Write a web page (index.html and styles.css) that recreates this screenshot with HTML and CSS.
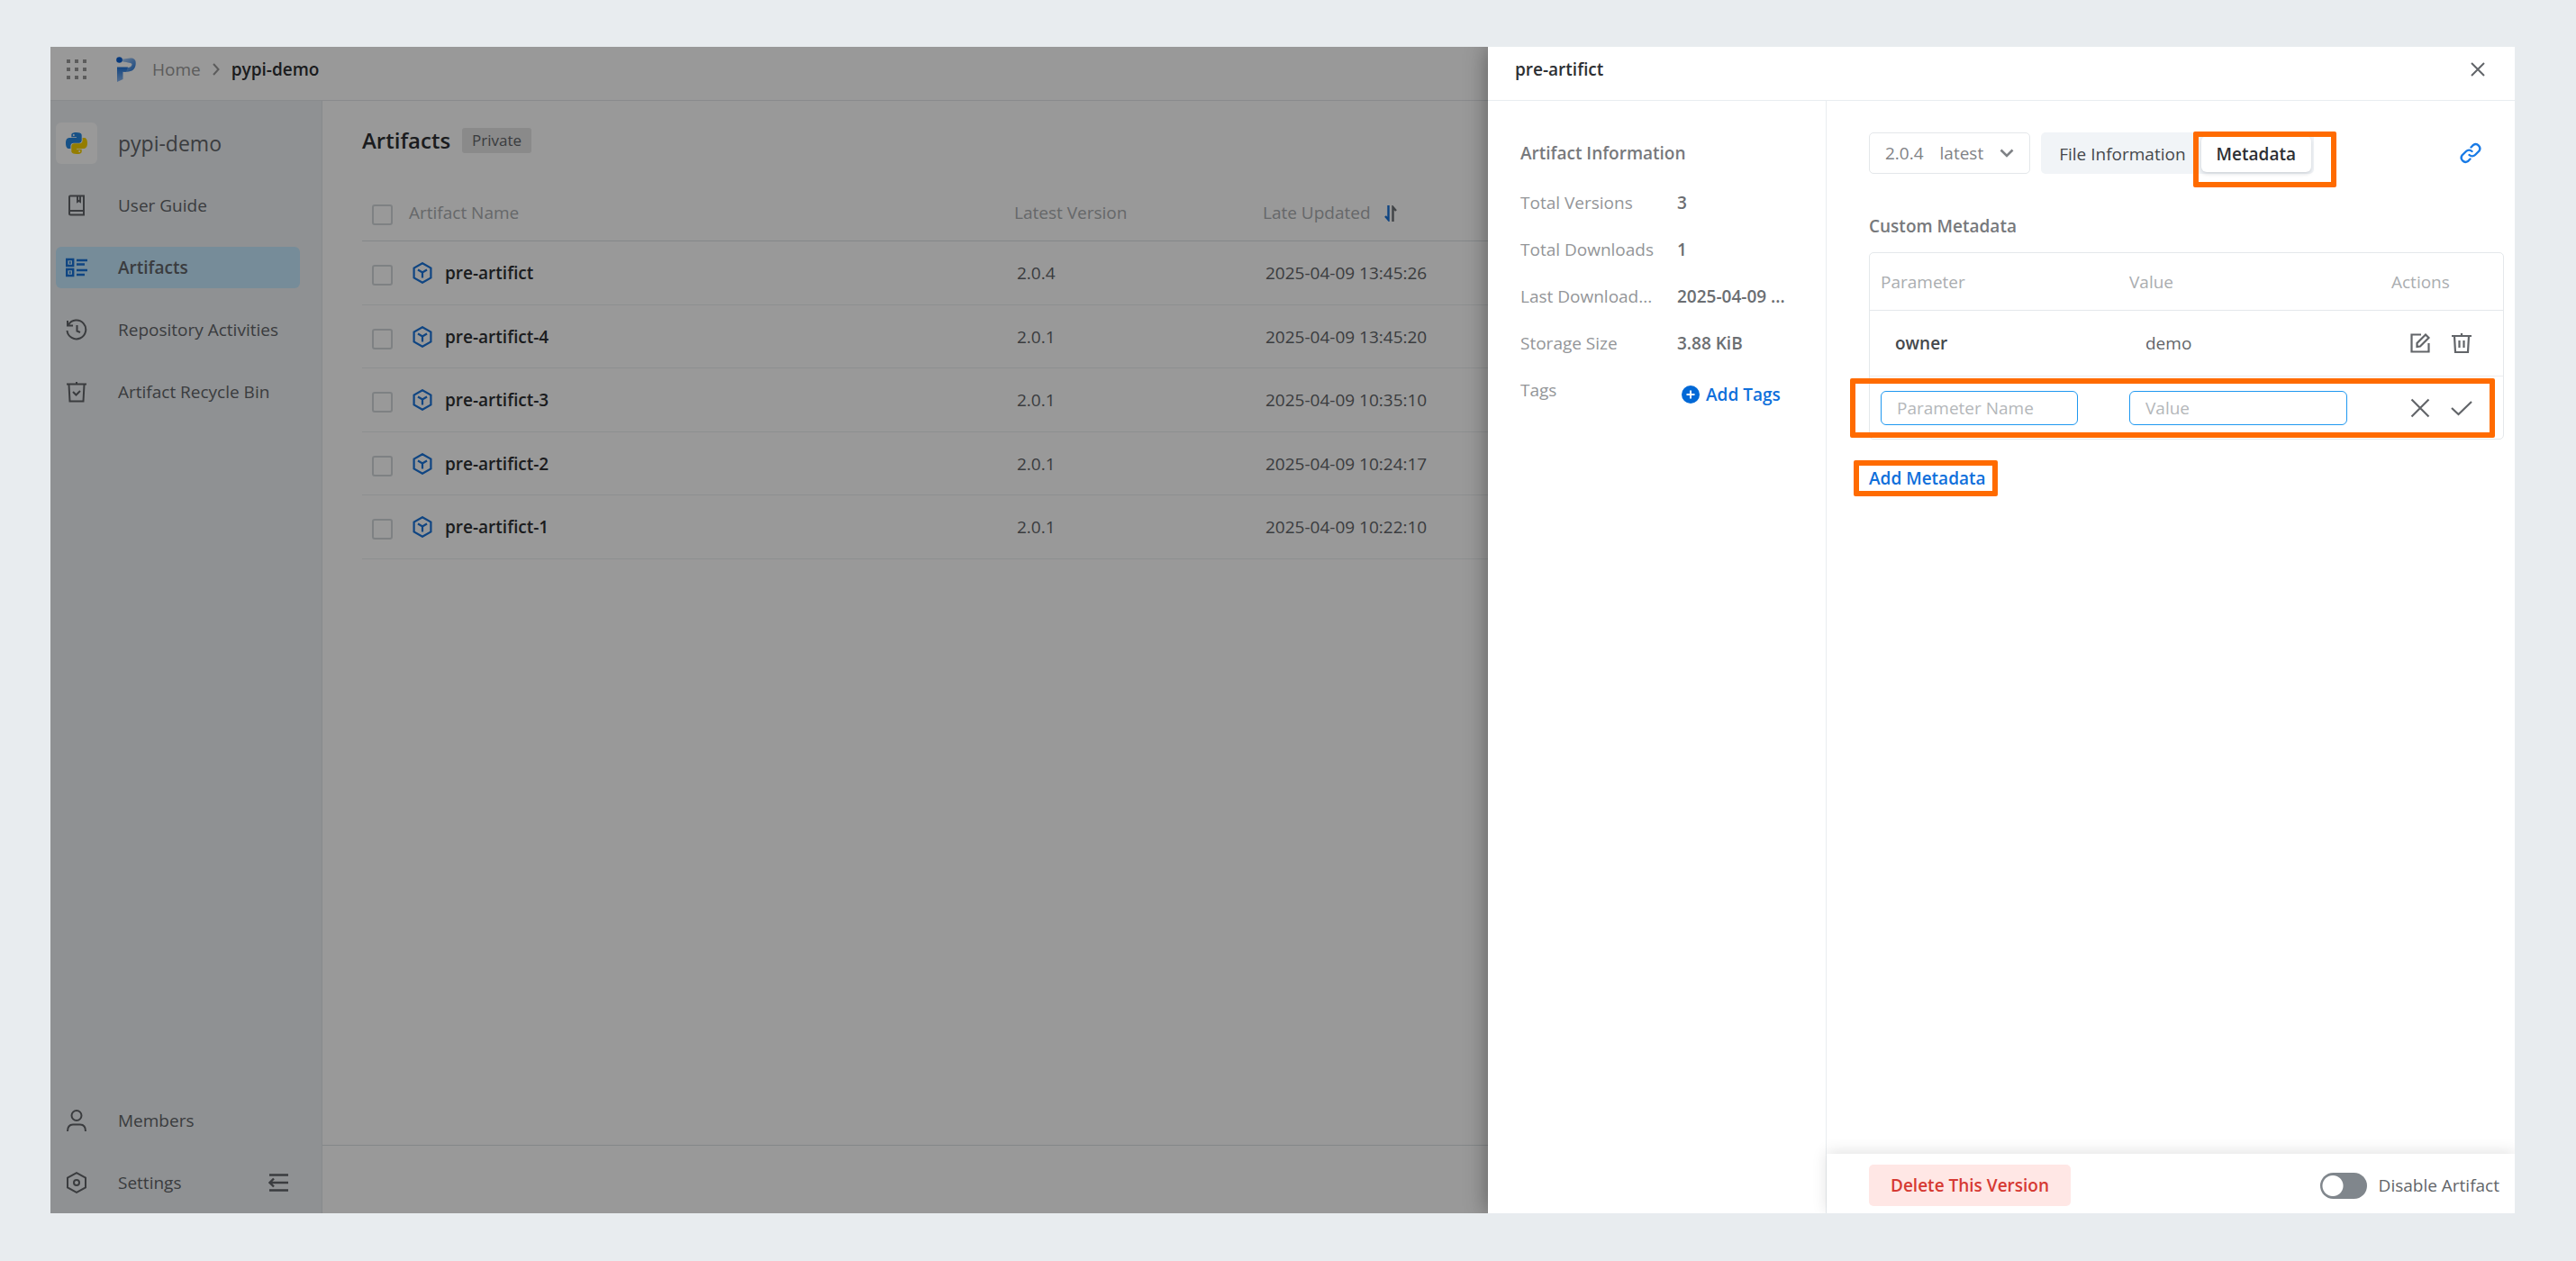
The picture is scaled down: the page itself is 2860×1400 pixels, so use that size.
FILE: index.html
```html
<!DOCTYPE html>
<html lang="en">
<head>
    <title>pypi-demo - Artifacts</title>
    <meta charset="UTF-8">
    <link rel="stylesheet" href="styles.css">
</head>
<body>
    <!-- shared icons -->
    <svg class="sprite" aria-hidden="true">
        <symbol id="icon-cube" viewBox="0 0 24 24">
            <path d="M12 1.200 21.400 6.600v10.800L12 22.800 2.600 17.400V6.600z" fill="none" stroke="currentColor" stroke-width="2.200"/>
            <path d="M7 8.500 12 11.500l5-3M12 11.500V17.500" fill="none" stroke="currentColor" stroke-width="2.200"/>
        </symbol>
        <symbol id="icon-chevron" viewBox="0 0 16 10">
            <path d="M1.500 1.500 8 8l6.500-6.500" fill="none" stroke="currentColor" stroke-width="2.600"/>
        </symbol>
    </svg>

    <div class="window">
        <header class="topbar">
            <button class="icon-btn apps" aria-label="Apps">
                <svg width="22" height="22" viewBox="0 0 22 22" fill="currentColor">
                    <path d="M0 0h4v4H0zM9 0h4v4H9zM18 0h4v4h-4zM0 9h4v4H0zM9 9h4v4H9zM18 9h4v4h-4zM0 18h4v4H0zM9 18h4v4H9zM18 18h4v4h-4z"/>
                </svg>
            </button>
            <svg class="logo" width="24" height="30" viewBox="0 0 24 30">
                <defs>
                    <linearGradient id="lg1" x1="0" y1="0" x2="1" y2="1">
                        <stop offset="0" stop-color="#b9d4f5"/>
                        <stop offset="1" stop-color="#1f73d8"/>
                    </linearGradient>
                    <linearGradient id="lg2" x1="0" y1="0" x2="0" y2="1">
                        <stop offset="0" stop-color="#1f73d8"/>
                        <stop offset="1" stop-color="#8fbaf0"/>
                    </linearGradient>
                </defs>
                <path d="M7 3C10 4.500 15 1.500 19.500 2.800c2.500 1 3.500 3 3.200 6.200-.4 6-4 8.500-9.700 8.700H9V13h5c2.500-.2 4.500-1.500 4.500-3.500C18.500 7.500 15 8 7 6z" fill="url(#lg1)"/>
                <path d="M2 12.500h12l-2 5.200H8.500V26L2 29z" fill="url(#lg2)"/>
                <circle cx="4.500" cy="4.500" r="3.300" fill="#0a5fd0"/>
            </svg>
            <nav class="crumbs">
                <a href="#">Home</a>
                <svg width="8" height="14" viewBox="0 0 8 14"><path d="M1 1l5.500 6L1 13" fill="none" stroke="currentColor" stroke-width="2"/></svg>
                <strong>pypi-demo</strong>
            </nav>
        </header>

        <div class="body">
            <aside class="sidebar">
                <div class="repo">
                    <span class="repo-icon">
                        <svg width="24" height="24" viewBox="0 0 24 24">
                            <path d="M11.900 0C6 0 6.300 2.600 6.300 2.600V5.300h5.700v.8H4S0 5.700 0 12c0 6.200 3.400 6 3.400 6h2v-2.900s-.1-3.400 3.400-3.400h5.700s3.200.1 3.200-3.200V3.200S18.200 0 11.900 0z" fill="#2787e0"/>
                            <circle cx="8.800" cy="2.900" r="1" fill="#fff"/>
                            <path d="M12.100 24c5.900 0 5.600-2.600 5.600-2.600v-2.700H12v-.8h8s4 .4 4-5.900c0-6.200-3.400-6-3.400-6h-2v2.900s.1 3.400-3.400 3.400H9.500s-3.200-.1-3.200 3.200v5.300S5.800 24 12.100 24z" fill="#f7d000"/>
                            <circle cx="15.200" cy="21.100" r="1" fill="#fff"/>
                        </svg>
                    </span>
                    <span>pypi-demo</span>
                </div>
                <a class="nav-item" href="#">
                    <svg width="24" height="24" viewBox="0 0 24 24" fill="none" stroke="currentColor" stroke-width="2">
                        <path d="M5 1.500h15v21H5.500A1.500 1.500 0 0 1 4 21V2.500a1 1 0 0 1 1-1zM4 18h16M13 2v6l1.500-1L16 8V2"/>
                    </svg>
                    User Guide
                </a>
                <a class="nav-item active" href="#">
                    <svg width="24" height="24" viewBox="0 0 24 24" fill="none" stroke="currentColor" stroke-width="2.400">
                        <path d="M1.200 3h7v7h-7zM1.200 14h7v7h-7zM4 6.500h1.500M4 17.500h1.500M12 4h12M12 8.500h9M12 15h12M12 20h9"/>
                    </svg>
                    Artifacts
                </a>
                <a class="nav-item" href="#">
                    <svg width="24" height="24" viewBox="0 0 24 24" fill="none" stroke="currentColor" stroke-width="2">
                        <path d="M3 6.500A10.400 10.400 0 1 1 1.500 13M2 2v5.500h6M12.500 7v6.500l3.500 1.500"/>
                    </svg>
                    Repository Activities
                </a>
                <a class="nav-item" href="#">
                    <svg width="24" height="24" viewBox="0 0 24 24" fill="none" stroke="currentColor" stroke-width="2">
                        <path d="M1 3.500h22M12 1v2.500M3.500 4l1 18.500h15l1-18.500M8 12l3.500 3.500L16 11"/>
                    </svg>
                    Artifact Recycle Bin
                </a>
                <div class="spacer"></div>
                <a class="nav-item" href="#">
                    <svg width="24" height="24" viewBox="0 0 24 24" fill="none" stroke="currentColor" stroke-width="2">
                        <circle cx="12" cy="6.500" r="5.500"/>
                        <path d="M2 24c0-5 2.500-7.500 6-7.500h8c3.500 0 6 2.500 6 7.500"/>
                    </svg>
                    Members
                </a>
                <div class="settings-row">
                    <a class="nav-item" href="#">
                        <svg width="24" height="24" viewBox="0 0 24 24" fill="none" stroke="currentColor" stroke-width="2">
                            <path d="M12 1.200 22 6.500v11L12 22.800 2 17.500v-11z"/>
                            <circle cx="12" cy="12" r="3"/>
                        </svg>
                        Settings
                    </a>
                    <button class="icon-btn" aria-label="Collapse sidebar">
                        <svg width="22" height="22" viewBox="0 0 22 22" fill="none" stroke="currentColor" stroke-width="2.400">
                            <path d="M1 2.500h21M1 11h21M1 19.500h21M6 6.500 1.500 11 6 15.500"/>
                        </svg>
                    </button>
                </div>
            </aside>

            <main class="main">
                <div class="main-body">
                    <div class="heading">
                        <h1>Artifacts</h1>
                        <span class="tag">Private</span>
                    </div>
                    <table class="artifacts">
                        <colgroup>
                            <col class="c-check"><col class="c-name"><col class="c-version"><col>
                        </colgroup>
                        <thead>
                            <tr>
                                <th><input type="checkbox" aria-label="Select all"></th>
                                <th>Artifact Name</th>
                                <th>Latest Version</th>
                                <th>Late Updated
                                    <svg class="sort" width="16" height="18" viewBox="0 0 16 18" fill="none" stroke-width="2.400">
                                        <path d="M5.500 0v16L2 12" stroke="#1a73d9"/>
                                        <path d="M10.500 18V2L14 6" stroke="#6b7075"/>
                                    </svg>
                                </th>
                            </tr>
                        </thead>
                        <tbody>
                            <tr>
                                <td><input type="checkbox" aria-label="Select pre-artifict"></td>
                                <td><a href="#"><svg width="24" height="24"><use href="#icon-cube"/></svg>pre-artifict</a></td>
                                <td>2.0.4</td>
                                <td>2025-04-09 13:45:26</td>
                            </tr>
                            <tr>
                                <td><input type="checkbox" aria-label="Select pre-artifict-4"></td>
                                <td><a href="#"><svg width="24" height="24"><use href="#icon-cube"/></svg>pre-artifict-4</a></td>
                                <td>2.0.1</td>
                                <td>2025-04-09 13:45:20</td>
                            </tr>
                            <tr>
                                <td><input type="checkbox" aria-label="Select pre-artifict-3"></td>
                                <td><a href="#"><svg width="24" height="24"><use href="#icon-cube"/></svg>pre-artifict-3</a></td>
                                <td>2.0.1</td>
                                <td>2025-04-09 10:35:10</td>
                            </tr>
                            <tr>
                                <td><input type="checkbox" aria-label="Select pre-artifict-2"></td>
                                <td><a href="#"><svg width="24" height="24"><use href="#icon-cube"/></svg>pre-artifict-2</a></td>
                                <td>2.0.1</td>
                                <td>2025-04-09 10:24:17</td>
                            </tr>
                            <tr>
                                <td><input type="checkbox" aria-label="Select pre-artifict-1"></td>
                                <td><a href="#"><svg width="24" height="24"><use href="#icon-cube"/></svg>pre-artifict-1</a></td>
                                <td>2.0.1</td>
                                <td>2025-04-09 10:22:10</td>
                            </tr>
                        </tbody>
                    </table>
                </div>
                <div class="pager"></div>
            </main>
        </div>

        <div class="mask"></div>

        <!-- artifact drawer -->
        <section class="drawer">
            <div class="drawer-head">
                <h2>pre-artifict</h2>
                <button class="icon-btn" aria-label="Close">
                    <svg width="16" height="16" viewBox="0 0 16 16"><path d="M1 1l14 14M15 1 1 15" stroke="currentColor" stroke-width="2"/></svg>
                </button>
            </div>
            <div class="drawer-body">
                <div class="info">
                    <h3>Artifact Information</h3>
                    <dl>
                        <dt>Total Versions</dt><dd>3</dd>
                        <dt>Total Downloads</dt><dd>1</dd>
                        <dt>Last Download...</dt><dd>2025-04-09 ...</dd>
                        <dt>Storage Size</dt><dd>3.88 KiB</dd>
                        <dt>Tags</dt>
                        <dd class="tags">
                            <button class="link-btn">
                                <svg width="20" height="20" viewBox="0 0 20 20"><circle cx="10" cy="10" r="10" fill="#0068d6"/><path d="M10 5.500v9M5.500 10h9" stroke="#fff" stroke-width="2"/></svg>
                                Add Tags
                            </button>
                        </dd>
                    </dl>
                </div>

                <div class="detail">
                    <div class="detail-body">
                        <div class="toolbar">
                            <button class="version">
                                <span>2.0.4</span><span>latest</span>
                                <svg width="16" height="10"><use href="#icon-chevron"/></svg>
                            </button>
                            <div class="tabs">
                                <button>File Information</button>
                                <button class="current">Metadata<span class="mark mark-tab"></span></button>
                            </div>
                            <button class="icon-btn copy-link" aria-label="Copy link">
                                <svg width="24" height="24" viewBox="0 0 24 24" fill="none" stroke="currentColor" stroke-width="2.400" stroke-linecap="round">
                                    <path d="M12.500 5.500 15 3a4.700 4.700 0 0 1 6.500 6.500l-4.500 4.500a4.700 4.700 0 0 1-6.500 0"/>
                                    <path d="M11.500 18.500 9 21a4.700 4.700 0 0 1-6.500-6.500L7 10a4.700 4.700 0 0 1 6.500 0"/>
                                </svg>
                            </button>
                        </div>

                        <h3>Custom Metadata</h3>
                        <div class="meta-box">
                            <table class="meta">
                                <colgroup><col class="m-param"><col class="m-value"><col></colgroup>
                                <thead>
                                    <tr><th>Parameter</th><th>Value</th><th>Actions</th></tr>
                                </thead>
                                <tbody>
                                    <tr>
                                        <td class="key">owner</td>
                                        <td class="val">demo</td>
                                        <td>
                                            <div class="actions">
                                                <button class="icon-btn" aria-label="Edit">
                                                    <svg width="24" height="24" viewBox="0 0 24 24" fill="none" stroke="currentColor" stroke-width="2.200">
                                                        <path d="M13 2.500H2.500v19h19V12"/>
                                                        <path d="M8.500 16v-4L18 2.500l3.500 3.500L12 15.500z"/>
                                                    </svg>
                                                </button>
                                                <button class="icon-btn" aria-label="Delete">
                                                    <svg width="24" height="24" viewBox="0 0 24 24" fill="none" stroke="currentColor" stroke-width="2.200">
                                                        <path d="M1 4h22M12 1v3M4 4l1 18h14l1-18M9.500 9v8M14.500 9v8"/>
                                                    </svg>
                                                </button>
                                            </div>
                                        </td>
                                    </tr>
                                    <tr class="editing">
                                        <td><input type="text" placeholder="Parameter Name" aria-label="Parameter Name"></td>
                                        <td><input type="text" placeholder="Value" aria-label="Value"></td>
                                        <td>
                                            <div class="actions">
                                                <button class="icon-btn" aria-label="Cancel">
                                                    <svg width="24" height="24" viewBox="0 0 24 24"><path d="M2.500 2.500l19 19M21.500 2.500l-19 19" stroke="currentColor" stroke-width="2.200"/></svg>
                                                </button>
                                                <button class="icon-btn" aria-label="Save">
                                                    <svg width="24" height="24" viewBox="0 0 24 24"><path d="M1 12l7.500 7L23 5" fill="none" stroke="currentColor" stroke-width="2.200"/></svg>
                                                </button>
                                            </div>
                                            <span class="mark mark-row"></span>
                                        </td>
                                    </tr>
                                </tbody>
                            </table>
                        </div>
                        <button class="link-btn add-meta">Add Metadata<span class="mark mark-add"></span></button>
                    </div>

                    <footer class="detail-foot">
                        <button class="danger">Delete This Version</button>
                        <label class="switch"><input type="checkbox">Disable Artifact</label>
                    </footer>
                </div>
            </div>
        </section>
    </div>
</body>
</html>
```

FILE: styles.css
```css
* {
    box-sizing: border-box;
}

body {
    margin: 0;
    height: 100vh;
    padding: 52px 68px 53px 56px;
    background: #e8ecef;
    font-family: "Open Sans", "Noto Sans", sans-serif;
    font-size: 19px;
    line-height: 28px;
    color: #626569;
}

h1, h2, h3, dl, dd {
    margin: 0;
}

a {
    color: inherit;
    text-decoration: none;
}

button, input {
    font: inherit;
    color: inherit;
}

button {
    padding: 0;
    border: none;
    background: none;
    cursor: pointer;
}

svg {
    display: block;
    flex: none;
}

.sprite {
    position: absolute;
    width: 0;
    height: 0;
}

.window {
    position: relative;
    display: flex;
    flex-direction: column;
    height: 100%;
    overflow: hidden;
    background: #fff;
}

/* top bar */
.topbar {
    display: flex;
    align-items: center;
    height: 60px;
    padding: 0 18px 10px;
    border-bottom: 1px solid #e4e8eb;
}

.apps {
    color: #999;
}

.logo {
    margin-left: 32px;
}

.crumbs {
    display: flex;
    align-items: center;
    gap: 13px;
    margin-left: 17px;
    color: #999;
}

.crumbs strong {
    font-weight: 600;
    color: #2d2f33;
}

.body {
    flex: 1;
    display: flex;
    min-height: 0;
}

/* sidebar */
.sidebar {
    display: flex;
    flex-direction: column;
    gap: 23px;
    width: 302px;
    padding: 24px 24px 11px 6px;
    background: #eff2f5;
    border-right: 1px solid #e2e6ea;
}

.repo {
    display: flex;
    align-items: center;
    gap: 23px;
    font-size: 23px;
}

.repo-icon {
    display: grid;
    place-items: center;
    width: 46px;
    height: 46px;
    background: #fff;
    border-radius: 6px;
}

.nav-item {
    display: flex;
    align-items: center;
    gap: 34px;
    height: 46px;
    padding-left: 11px;
    border-radius: 6px;
}

.nav-item.active {
    background: #c5e9ff;
    font-weight: 600;
}

.nav-item.active svg {
    color: #1a73d9;
}

.spacer {
    flex: 1;
}

.settings-row {
    display: flex;
    justify-content: space-between;
    align-items: center;
    padding-right: 13px;
}

/* artifact list */
.main {
    flex: 1;
    display: flex;
    flex-direction: column;
}

.main-body {
    flex: 1;
    padding: 29px 44px;
}

.heading {
    display: flex;
    align-items: center;
    gap: 13px;
    height: 30px;
}

.heading h1 {
    font-size: 24px;
    font-weight: 600;
    color: #2d2f33;
}

.tag {
    padding: 0 11px;
    background: #e6e6e6;
    border-radius: 3px;
    font-size: 17px;
}

.artifacts {
    width: 100%;
    margin-top: 33px;
    table-layout: fixed;
    border-collapse: separate;
    border-spacing: 0;
}

.c-check {
    width: 52px;
}

.c-name {
    width: 672px;
}

.c-version {
    width: 276px;
}

.artifacts th {
    height: 64px;
    padding: 0;
    border-bottom: 1px solid #dde1e4;
    font-weight: 400;
    text-align: left;
    color: #aaadb0;
}

.artifacts td {
    height: 70px;
    padding: 0 3px;
    border-bottom: 1px solid #eceef0;
}

.artifacts tr:nth-child(odd) td {
    height: 71px;
}

.artifacts a {
    display: flex;
    align-items: center;
    gap: 13px;
    font-weight: 600;
    color: #2d2f33;
}

.artifacts a svg {
    color: #1a73d9;
}

.artifacts input {
    display: block;
    appearance: none;
    width: 23px;
    height: 23px;
    margin: 5px 0 0 11px;
    border: 2px solid #d3d7db;
    border-radius: 3px;
}

.artifacts td input {
    margin-left: 8px;
}

.sort {
    display: inline-block;
    margin-left: 9px;
    vertical-align: middle;
}

.pager {
    height: 76px;
    border-top: 1px solid #dde1e4;
}

.mask {
    position: absolute;
    inset: 0;
    background: rgba(0, 0, 0, 0.4);
}

/* drawer */
.drawer {
    position: absolute;
    top: 0;
    right: 0;
    bottom: 0;
    display: flex;
    flex-direction: column;
    width: 1140px;
    max-width: 100%;
    background: #fff;
    box-shadow: 0 0 24px rgba(0, 0, 0, 0.4);
}

.drawer-head {
    display: flex;
    justify-content: space-between;
    align-items: center;
    height: 60px;
    padding: 0 33px 10px 30px;
    border-bottom: 1px solid #e9edf0;
}

.drawer-head h2 {
    font-size: 19px;
    font-weight: 600;
    color: #2d2f33;
}

.drawer-body {
    flex: 1;
    display: flex;
    min-height: 0;
}

.drawer h3 {
    font-size: 19px;
    font-weight: 600;
    color: #77797c;
}

.info {
    width: 376px;
    padding: 44px 36px;
    border-right: 1px solid #e9edf0;
}

.info dl {
    display: grid;
    grid-template-columns: 150px 1fr;
    column-gap: 24px;
    row-gap: 24px;
    margin-top: 27px;
    white-space: nowrap;
}

.info dt {
    color: #939598;
}

.info dd {
    font-weight: 600;
    color: #6b6e72;
}

.info .tags {
    padding: 5px 0 0 5px;
}

.link-btn {
    display: flex;
    align-items: center;
    gap: 7px;
    font-weight: 600;
    color: #0f6fdb;
}

.detail {
    flex: 1;
    display: flex;
    flex-direction: column;
}

.detail-body {
    flex: 1;
    padding: 35px 12px 0 47px;
}

.toolbar {
    display: flex;
    align-items: center;
    gap: 12px;
}

.version {
    display: flex;
    align-items: center;
    gap: 18px;
    height: 46px;
    padding: 0 17px;
    border: 1px solid #e4e7ea;
    border-radius: 5px;
    color: #7f8286;
}

.tabs {
    display: flex;
    align-items: center;
    height: 46px;
    padding: 3px 3px 1px;
    background: #f1f4f7;
    border-radius: 5px;
    color: #45484c;
}

.tabs button {
    position: relative;
    height: 40px;
    padding: 0 17px;
    border-radius: 6px;
}

.tabs .current {
    background: #fff;
    box-shadow: 0 2px 4px rgba(0, 20, 40, 0.15);
    font-weight: 600;
    color: #2d2f33;
}

.copy-link {
    margin-left: auto;
    margin-right: 25px;
    color: #1a7be6;
}

.detail-body h3 {
    margin-top: 44px;
}

.meta-box {
    margin-top: 15px;
    border: 1px solid #e4e8eb;
    border-radius: 5px;
}

.meta {
    width: 100%;
    table-layout: fixed;
    border-collapse: separate;
    border-spacing: 0;
}

.m-param {
    width: 276px;
}

.m-value {
    width: 291px;
}

.meta th {
    height: 64px;
    padding: 0 12px;
    border-bottom: 1px solid #e4e8eb;
    font-weight: 400;
    text-align: left;
    color: #aaadb0;
}

.meta td {
    height: 73px;
    padding: 0 12px;
    border-bottom: 1px solid #eceef0;
}

.meta .key {
    padding-left: 28px;
    font-weight: 600;
    color: #45484c;
}

.meta .val {
    padding-left: 30px;
}

.meta .editing td {
    height: 69px;
    border-bottom: none;
}

.meta .editing {
    position: relative;
}

.meta input {
    display: block;
    width: 219px;
    height: 38px;
    padding: 0 17px;
    border: 1px solid #1f98f0;
    border-radius: 6px;
    background: #fff;
}

.meta td + td input {
    width: 242px;
}

.meta input::placeholder {
    color: #b4b7ba;
}

.actions {
    display: flex;
    gap: 22px;
    padding-left: 20px;
}

.add-meta {
    position: relative;
    margin-top: 29px;
}

/* orange callouts */
.mark {
    position: absolute;
    border: 6px solid #ff6b00;
    border-radius: 2px;
    pointer-events: none;
}

.mark-tab {
    inset: -5px -28px -17px -9px;
}

.mark-row {
    inset: 2px 9px 1px -22px;
}

.mark-add {
    inset: -6px -13px -6px -17px;
}

.detail-foot {
    display: flex;
    justify-content: space-between;
    align-items: center;
    height: 66px;
    padding: 4px 17px 0 47px;
    background: #fff;
    box-shadow: 0 -2px 16px rgba(0, 0, 0, 0.12);
}

.danger {
    height: 46px;
    padding: 0 24px;
    border-radius: 5px;
    background: #ffe7e5;
    font-weight: 600;
    color: #d63a33;
}

.switch {
    display: flex;
    align-items: center;
    gap: 13px;
}

.switch input {
    appearance: none;
    width: 52px;
    height: 29px;
    margin: 0;
    border-radius: 15px;
    background: radial-gradient(circle at 14px 50%, #fff 11px, #80868c 12px);
}
```
